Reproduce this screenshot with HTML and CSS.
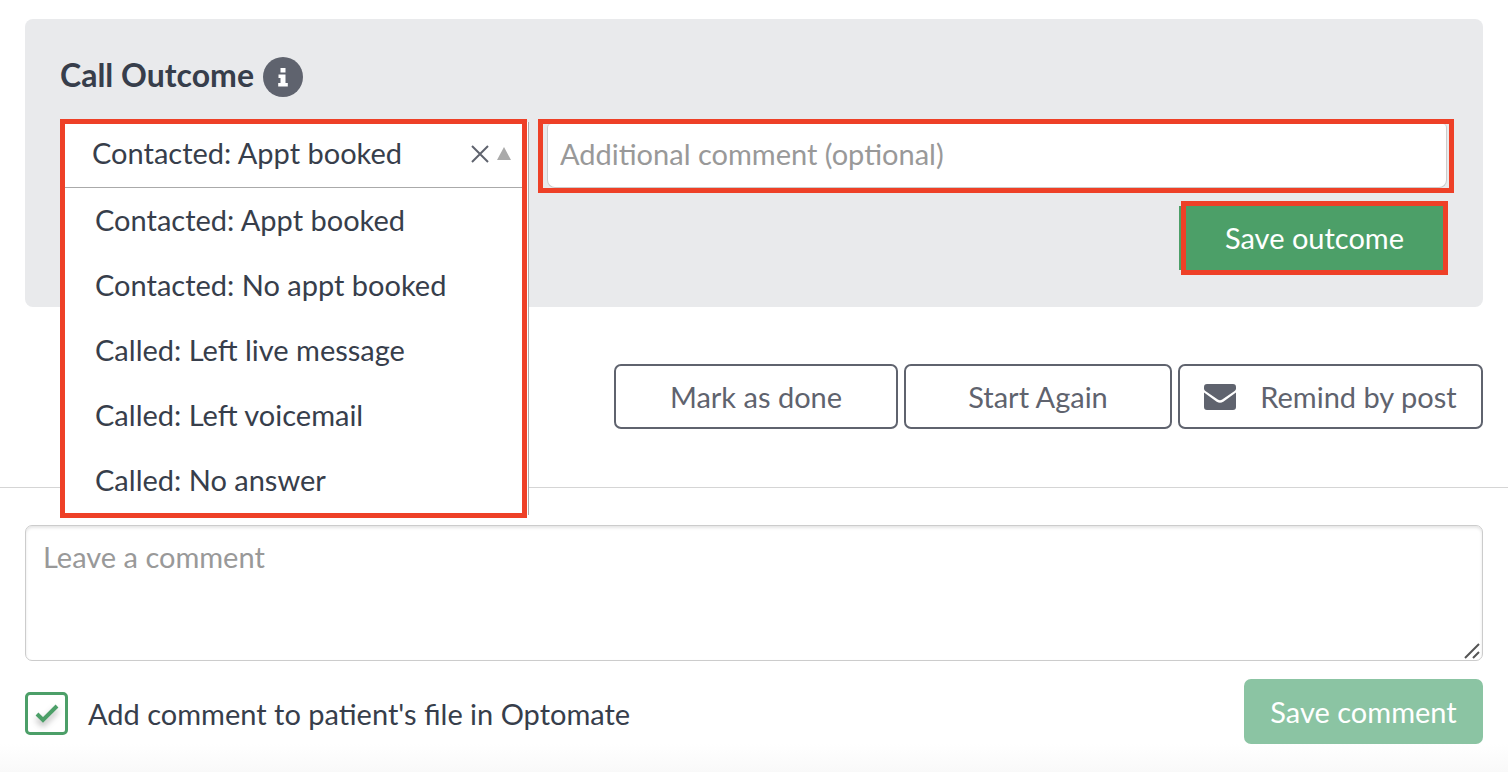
FILE: index.html
```html
<!DOCTYPE html>
<html lang="en">
<head>
    <meta charset="UTF-8">
    <meta name="viewport" content="width=device-width, initial-scale=1.0">
    <title>Call Outcome</title>
    <link rel="stylesheet" href="styles.css">
</head>
<body>
    <main class="page">
        <section class="outcome-panel">
            <div class="outcome-header">
                <h2>Call Outcome</h2>
                <button type="button" class="info-button" aria-label="Info">
                    <svg width="10" height="20" viewBox="0 0 10 20" fill="currentColor">
                        <path d="M2.500 1h5v4.500h-5zM.5 7.500h7v8.500H9.800v3.500H.2V16h2.300v-5H.5z"/>
                    </svg>
                </button>
            </div>

            <div class="outcome-fields">
                <div class="picker">
                    <div class="picker-open">
                        <div class="picker-value">
                            <select id="outcome" aria-label="Call outcome">
                                <option>Contacted: Appt booked</option>
                                <option>Contacted: No appt booked</option>
                                <option>Called: Left live message</option>
                                <option>Called: Left voicemail</option>
                                <option>Called: No answer</option>
                            </select>
                            <button type="button" class="clear-button" aria-label="Clear">
                                <svg width="18" height="18" viewBox="0 0 18 18" fill="none" stroke="currentColor" stroke-width="2">
                                    <path d="M1 1l16 16M17 1L1 17"/>
                                </svg>
                            </button>
                            <span class="picker-arrow"></span>
                        </div>
                        <ul class="picker-list">
                            <li>Contacted: Appt booked</li>
                            <li>Contacted: No appt booked</li>
                            <li>Called: Left live message</li>
                            <li>Called: Left voicemail</li>
                            <li>Called: No answer</li>
                        </ul>
                    </div>
                </div>

                <div class="outcome-side">
                    <div class="note-frame">
                        <input type="text" class="note-input" placeholder="Additional comment (optional)" aria-label="Additional comment">
                    </div>
                    <button type="button" class="save-outcome">Save outcome</button>
                </div>
            </div>
        </section>

        <div class="actions">
            <button type="button" class="action-button action-done">Mark as done</button>
            <button type="button" class="action-button action-restart">Start Again</button>
            <button type="button" class="action-button action-post">
                <svg width="32" height="26" viewBox="0 0 32 26" fill="currentColor">
                    <path d="M3 0h26a3 3 0 0 1 3 3v1.500c0 1-.5 1.800-1.400 2.400L18.200 15.600c-1.500 1-2.900 1-4.400 0L1.400 6.900C.5 6.300 0 5.500 0 4.500V3a3 3 0 0 1 3-3z"/>
                    <path d="M0 8.500l12.700 9.200c2.200 1.500 4.400 1.500 6.600 0L32 8.500V23a3 3 0 0 1-3 3H3a3 3 0 0 1-3-3z"/>
                </svg>
                Remind by post
            </button>
        </div>

        <hr class="divider">

        <form class="comment-form">
            <div class="comment-box">
                <textarea placeholder="Leave a comment" aria-label="Comment"></textarea>
                <svg class="comment-grip" width="16" height="16" viewBox="0 0 16 16" fill="none" stroke="#555" stroke-width="2">
                    <path d="M1 15L15 1M9 15l6-6"/>
                </svg>
            </div>
            <div class="comment-footer">
                <label class="file-option">
                    <span class="tick">
                        <input type="checkbox" checked>
                        <svg width="24" height="20" viewBox="0 0 24 20" fill="none" stroke="#4c9f68" stroke-width="4">
                            <path d="M2 10l6 6L22 2"/>
                        </svg>
                    </span>
                    Add comment to patient's file in Optomate
                </label>
                <button type="button" class="save-comment" disabled>Save comment</button>
            </div>
        </form>
        <div class="page-fade"></div>
    </main>
</body>
</html>
```

FILE: styles.css
```css
* {
    box-sizing: border-box;
}

body {
    margin: 0;
    background-color: #fff;
    color: #373e4b;
    font-family: Lato, "Liberation Sans", sans-serif;
    font-size: 29px;
    line-height: 40px;
}

button,
input,
select,
textarea {
    font: inherit;
    color: inherit;
    margin: 0;
}

button {
    padding: 0;
    cursor: pointer;
}

svg {
    display: block;
    flex: none;
}

.page {
    padding-top: 19px;
}

.outcome-panel {
    margin: 0 25px;
    padding: 38px 29px 32px 35px;
    background-color: #e9eaec;
    border-radius: 8px;
}

.outcome-header {
    display: flex;
    align-items: center;
    gap: 9px;
    margin-bottom: 22px;
}

.outcome-header h2 {
    margin: 0;
    padding-bottom: 4px;
    font-size: 32px;
    line-height: 36px;
}

.info-button {
    display: flex;
    align-items: center;
    justify-content: center;
    width: 40px;
    height: 40px;
    border: none;
    border-radius: 50%;
    background-color: #5f636e;
    color: #fff;
}

.outcome-fields {
    display: flex;
    gap: 11px;
}

/* dropdown, shown open over the content below */
.picker {
    position: relative;
    flex: 0 0 467px;
}

.picker-open {
    position: absolute;
    top: 0;
    left: 0;
    z-index: 2;
    width: 100%;
    background-color: #fff;
    border: 5px solid #ee4027;
    box-shadow: 4px 0 0 -3px #fff, 5px 0 0 -3px #aaa;
}

.picker-value {
    display: flex;
    align-items: center;
    height: 64px;
    padding: 0 11px 4px 27px;
    border-bottom: 1px solid #aaa;
}

.picker-value select {
    flex: 1;
    min-width: 0;
    padding: 0 0 2px;
    border: none;
    background: none;
    appearance: none;
}

.clear-button {
    margin-right: 8px;
    border: none;
    background: none;
    color: #5f636e;
}

.picker-arrow {
    border: 7px solid transparent;
    border-top: none;
    border-bottom: 13px solid #aaa;
}

.picker-list {
    margin: 0;
    padding: 0;
    list-style: none;
}

.picker-list li {
    padding: 0 30px 2px;
    line-height: 63px;
}

.outcome-side {
    flex: 1;
    display: flex;
    flex-direction: column;
    align-items: flex-end;
    gap: 8px;
}

.note-frame {
    width: 100%;
    height: 74px;
    padding: 0 2px 0 4px;
    border: 5px solid #ee4027;
}

.note-input {
    display: block;
    width: 100%;
    height: 64px;
    padding: 0 12px 4px;
    border: 1px solid #ccc;
    border-top: none;
    border-radius: 4px 4px 8px 8px;
    background-color: #fff;
}

::placeholder {
    color: #999;
    opacity: 1;
}

.save-outcome {
    width: 267px;
    height: 74px;
    margin-right: 6px;
    border: 5px solid #ee4027;
    background-color: #4c9f68;
    box-shadow: -7px 0 0 -5px #4c9f68;
    color: #fff;
}

.actions {
    display: flex;
    justify-content: flex-end;
    gap: 6px;
    margin: 57px 25px 58px;
}

.action-button {
    display: flex;
    align-items: center;
    justify-content: center;
    gap: 24px;
    height: 65px;
    border: 2px solid #5f636e;
    border-radius: 7px;
    background-color: #fff;
    color: #5f636e;
}

.action-done {
    width: 284px;
}

.action-restart {
    width: 268px;
}

.action-post {
    width: 305px;
}

.divider {
    height: 1px;
    margin: 0;
    border: none;
    background-color: #d5d5d5;
}

.comment-form {
    padding: 37px 25px 0;
}

.comment-box {
    position: relative;
}

.comment-box textarea {
    display: block;
    width: 100%;
    height: 136px;
    padding: 11px 17px;
    border: 1px solid #ccc;
    border-radius: 7px;
    background-color: #fff;
    box-shadow: inset 0 2px 3px rgba(0, 0, 0, 0.1);
    resize: vertical;
}

textarea::-webkit-resizer {
    display: none;
}

.comment-grip {
    position: absolute;
    right: 3px;
    bottom: 2px;
    pointer-events: none;
}

.comment-footer {
    display: flex;
    align-items: center;
    justify-content: space-between;
    margin-top: 18px;
}

.file-option {
    display: flex;
    align-items: center;
    gap: 20px;
    padding-top: 4px;
}

.tick {
    display: grid;
    place-items: center;
}

.tick input,
.tick svg {
    grid-area: 1 / 1;
}

.tick input {
    width: 43px;
    height: 43px;
    border: 3px solid #4c9f68;
    border-radius: 5px;
    background-color: #fff;
    appearance: none;
}

.tick svg {
    filter: drop-shadow(0 4px 3px rgba(0, 0, 0, 0.3));
    pointer-events: none;
}

.save-comment {
    width: 239px;
    height: 65px;
    border: none;
    border-radius: 7px;
    background-color: #8bc4a3;
    color: #fff;
}

.page-fade {
    height: 28px;
    background: linear-gradient(#fff, #f9f9f9);
}
```
